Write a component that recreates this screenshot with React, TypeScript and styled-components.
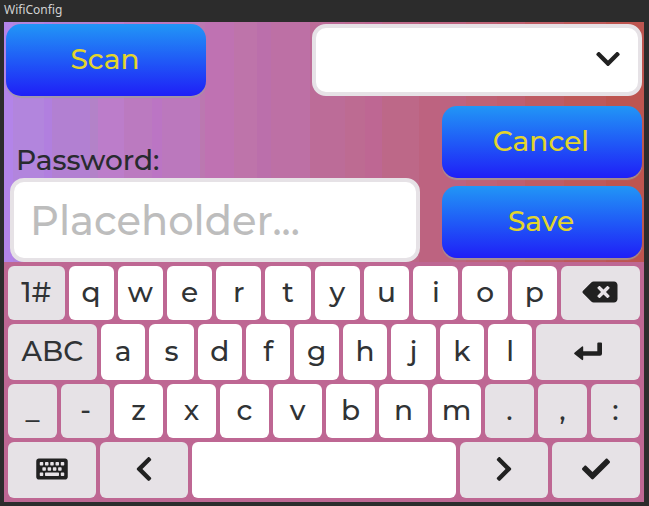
import React, { useState } from "react";
import styled, { createGlobalStyle } from "styled-components";
import {
  FaBackspace,
  FaCheck,
  FaChevronDown,
  FaChevronLeft,
  FaChevronRight,
  FaKeyboard,
} from "react-icons/fa";

const GlobalStyle = createGlobalStyle`
  * { box-sizing: border-box; }
  body { margin: 0; background: #2c2c2c; }
`;

const uiFont = `Montserrat, Inter, "Noto Sans", sans-serif`;

const bands: [number, string][] = [
  [1.4, "#b384e9"],
  [6.2, "#b285dd"],
  [7.5, "#b17fdf"],
  [13.4, "#b280d2"],
  [14.7, "#b382c8"],
  [18.7, "#bc7dca"],
  [23.2, "#bb7ac0"],
  [24.7, "#bb75c4"],
  [30.6, "#bb78bd"],
  [31.4, "#bb78b0"],
  [35.9, "#bf72b2"],
  [39.5, "#be74aa"],
  [41.7, "#bb6fab"],
  [47.8, "#bd70a5"],
  [53.3, "#bc6c98"],
  [56.4, "#bd6b92"],
  [59.1, "#be6793"],
  [64.8, "#bd6888"],
  [72.2, "#bd6380"],
  [77, "#be6276"],
  [81.4, "#bf5f70"],
  [87.5, "#be5c64"],
  [94, "#be5959"],
  [100, "#bd5550"],
];

const backdrop = bands
  .map(([end, color], i) => `${color} ${i ? bands[i - 1][0] : 0}% ${end}%`)
  .join(", ");

const Window = styled.div`
  padding: 0 5px 4px 4px;
  font-family: ${uiFont};
  font-weight: 500;
  color: #282b2e;
`;

const TitleBar = styled.header`
  height: 22px;
  font: 400 12px/20px "Noto Sans", sans-serif;
  color: #d2d2d2;
`;

const Screen = styled.main`
  background: linear-gradient(to right, ${backdrop});
`;

const Form = styled.form`
  padding: 2px 2px 0;
`;

const TopRow = styled.div`
  display: flex;
  justify-content: space-between;
`;

const FieldRow = styled.div`
  display: flex;
  justify-content: space-between;
  align-items: flex-end;
  padding: 10px 0 0 4px;
`;

const ActionButton = styled.button`
  width: 200px;
  height: 72px;
  padding: 0 2px 2px 0;
  border: 0;
  border-radius: 15px;
  background: linear-gradient(#2196f6, #1f1ff7);
  box-shadow: 0 2px 1px rgba(158, 158, 158, 0.75);
  color: #e2d52c;
  font: 500 28px/32px ${uiFont};
`;

const NetworkPicker = styled.div`
  position: relative;
  width: 52%;
  max-width: 330px;
`;

const NetworkSelect = styled.select`
  appearance: none;
  display: block;
  width: 100%;
  height: 72px;
  padding: 0 60px 0 20px;
  border: 4px solid #e6e2e6;
  border-radius: 14px;
  background: #fff;
  color: inherit;
  font: 500 28px/32px ${uiFont};
`;

const PickerArrow = styled(FaChevronDown)`
  position: absolute;
  right: 22px;
  top: 21px;
  width: 24px;
  height: 28px;
  color: #212121;
  pointer-events: none;
`;

const PasswordField = styled.div`
  flex: 1;
  max-width: 410px;
`;

const PasswordLabel = styled.label`
  display: block;
  padding: 0 6px 2px;
  font-size: 28px;
  line-height: 32px;
`;

const PasswordInput = styled.input`
  display: block;
  width: 100%;
  height: 84px;
  padding: 0 16px;
  border: 4px solid #e6e2e6;
  border-radius: 14px;
  background: #fff;
  color: inherit;
  font: 500 40px/48px ${uiFont};
  &::placeholder { color: #bdbdbd; opacity: 1; }
`;

const Actions = styled.div`
  display: flex;
  flex-direction: column;
  gap: 8px;
  padding-bottom: 4px;
`;

const Keyboard = styled.section`
  display: grid;
  grid-template-rows: 54px 56px 54px 56px;
  gap: 4px;
  padding: 4px;
  background: #be6793;
`;

const KeyRow = styled.div`
  display: flex;
  gap: 4px;
`;

const Key = styled.button<{ $span: number; $muted?: boolean }>`
  flex: ${(p) => p.$span} 1 0;
  min-width: 0;
  display: flex;
  align-items: center;
  justify-content: center;
  padding: 0 0 2px;
  border: 0;
  border-radius: 6px;
  background: ${(p) => (p.$muted ? "#e6e2e6" : "#fff")};
  color: #303335;
  font: 500 28px/32px ${uiFont};
`;

const Glyph = styled.span<{ $width: number }>`
  display: flex;
  svg { width: ${(p) => p.$width}px; height: 28px; color: #212121; }
`;

const ReturnIcon = () => (
  <svg viewBox="0 0 28 28" fill="currentColor" aria-hidden="true">
    <path d="M23.300 6.500q0-1 1-1H27q1 0 1 1V16.800q0 2-2 2H9.200v3.300q0 1.900-1.500.7L.7 17.300q-1.100-.9 0-1.800l7-5.800q1.500-1.200 1.500.6V14.300h14.100z" />
  </svg>
);

type KeySpec = {
  id: string;
  span: number;
  muted?: boolean;
  face?: React.ReactNode;
};

const letters = (text: string, span: number): KeySpec[] =>
  text.split("").map((id) => ({ id, span }));

const symbols = (text: string, span: number): KeySpec[] =>
  text.split("").map((id) => ({ id, span, muted: true }));

const glyphKey = (
  id: string,
  span: number,
  width: number,
  icon: React.ReactNode
): KeySpec => ({
  id,
  span,
  muted: true,
  face: <Glyph $width={width}>{icon}</Glyph>,
});

const rows: KeySpec[][] = [
  [
    { id: "1#", span: 5, muted: true },
    ...letters("qwertyuiop", 4),
    glyphKey("Backspace", 7, 36, <FaBackspace />),
  ],
  [
    { id: "ABC", span: 6, muted: true },
    ...letters("asdfghjkl", 3),
    glyphKey("Enter", 7, 28, <ReturnIcon />),
  ],
  [...symbols("_-", 1), ...letters("zxcvbnm", 1), ...symbols(".,:", 1)],
  [
    glyphKey("Hide keyboard", 2, 32, <FaKeyboard />),
    glyphKey("Previous", 2, 18, <FaChevronLeft />),
    { id: "Space", span: 6, face: "" },
    glyphKey("Next", 2, 18, <FaChevronRight />),
    glyphKey("Accept", 2, 28, <FaCheck />),
  ],
];

export default function App() {
  const [password, setPassword] = useState("");

  const press = (id: string) => {
    if (id === "Backspace") setPassword((p) => p.slice(0, -1));
    else if (id === "Space") setPassword((p) => p + " ");
    else if (id.length === 1) setPassword((p) => p + id);
  };

  return (
    <>
      <GlobalStyle />
      <Window>
        <TitleBar>WifiConfig</TitleBar>
        <Screen>
          <Form onSubmit={(e) => e.preventDefault()}>
            <TopRow>
              <ActionButton type="button">Scan</ActionButton>
              <NetworkPicker>
                <NetworkSelect aria-label="Network">
                  <option value="" />
                </NetworkSelect>
                <PickerArrow aria-hidden="true" />
              </NetworkPicker>
            </TopRow>
            <FieldRow>
              <PasswordField>
                <PasswordLabel htmlFor="password">Password:</PasswordLabel>
                <PasswordInput
                  id="password"
                  type="text"
                  placeholder="Placeholder..."
                  value={password}
                  onChange={(e) => setPassword(e.target.value)}
                />
              </PasswordField>
              <Actions>
                <ActionButton type="button">Cancel</ActionButton>
                <ActionButton type="submit">Save</ActionButton>
              </Actions>
            </FieldRow>
          </Form>
          <Keyboard aria-label="Keyboard">
            {rows.map((row, i) => (
              <KeyRow key={i}>
                {row.map((k) => (
                  <Key
                    key={k.id}
                    type="button"
                    $span={k.span}
                    $muted={k.muted}
                    aria-label={k.id}
                    onClick={() => press(k.id)}
                  >
                    {k.face ?? k.id}
                  </Key>
                ))}
              </KeyRow>
            ))}
          </Keyboard>
        </Screen>
      </Window>
    </>
  );
}
